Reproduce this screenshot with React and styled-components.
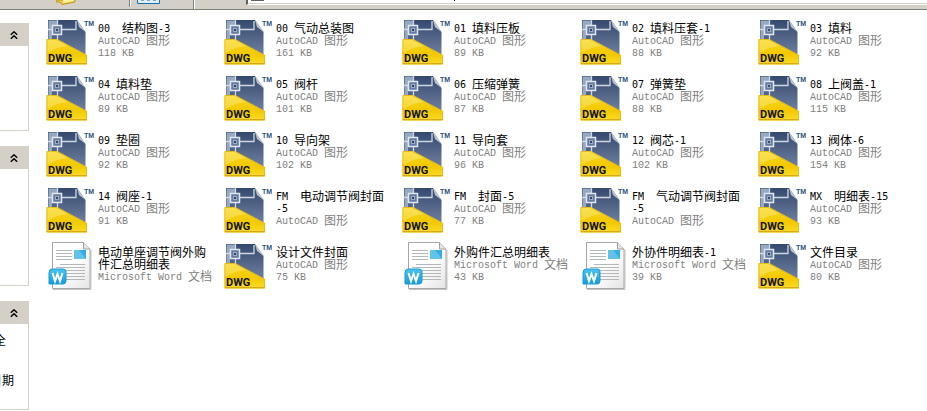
import React from 'react'
import styled, { createGlobalStyle } from 'styled-components';

const GlobalStyle = createGlobalStyle`
    * {
        box-sizing: border-box;
    }
    body {
        margin: 0;
        background-color: #fff;
        color: #000;
        font-family: "Noto Sans CJK SC", sans-serif;
        font-size: 12px;
        line-height: 12px;
    }
`;

const Container = styled.div`
    display: flex;
    flex-direction: column;
    min-height: 100vh;
    overflow: hidden;
`;

const Toolbar = styled.header`
    display: flex;
    align-items: flex-start;
    height: 10px;
    padding-left: 56px;
    overflow: hidden;
    background-color: #d4d0c8;
    border-bottom: 1px solid #808080;
`;

const ToolButton = styled.button`
    width: ${props=>props.$width}px;
    height: 5px;
    margin: 0;
    padding: 0;
    border: 0;
    background: none;

    svg {
        display: block;
    }
`;

const Separator = styled.div`
    width: 2px;
    height: ${props=>props.$height}px;
    margin: 0 ${props=>props.$after}px 0 ${props=>props.$before}px;
    border-left: 1px solid #808080;
    border-right: 1px solid #fff;
`;

const Address = styled.label`
    flex: 1;
    display: flex;
    height: 5px;
    overflow: hidden;
    background-color: #fff;
    border-left: 2px solid #606060;
    border-bottom: 1px solid #fff;
    box-shadow: inset 0 -1px 0 #d4d0c8;

    svg {
        flex: none;
        display: block;
    }
`;

const AddressInput = styled.input`
    flex: 1;
    height: 3px;
    padding: 0;
    border: 0;
    outline: 0;
    background: none;
`;

const Main = styled.div`
    flex: 1;
    display: flex;
    align-items: flex-start;
`;

const Sidebar = styled.aside`
    flex: none;
    display: flex;
    flex-direction: column;
    gap: 15px;
    width: 29px;
    padding-top: 13px;
    overflow: hidden;
`;

const Panel = styled.section`
    height: ${props=>props.$height}px;
    border-right: 1px solid #d4d0c8;
    border-bottom: 1px solid #d4d0c8;
`;

const PanelToggle = styled.button`
    display: flex;
    align-items: center;
    justify-content: center;
    width: 100%;
    height: 23px;
    margin: 0;
    padding: 0;
    border: 0;
    background-color: #d4d0c8;
`;

const PanelText = styled.p`
    display: flex;
    justify-content: flex-end;
    margin: 0;
    padding: ${props=>props.$top}px ${props=>props.$right}px 0 0;
    white-space: nowrap;
`;

const Files = styled.ul`
    flex: 1;
    display: grid;
    grid-template-columns: repeat(auto-fill, 168px);
    grid-auto-rows: 48px;
    gap: 8px 10px;
    margin: 0;
    padding: 8px 0 0 17px;
    list-style: none;
`;

const FileItem = styled.li`
    display: flex;
    gap: 4px;

    svg {
        flex: none;
    }
`;

const FileText = styled.div`
    width: 116px;
    padding-top: 4px;
`;

const FileName = styled.div`
    color: #000;
`;

const FileMeta = styled.div`
    color: #808080;
    white-space: nowrap;
`;

const Latin = styled.span`
    display: inline-block;
    font-family: ${props=>props.$light ? '"Liberation Mono"' : '"DejaVu Sans Mono"'}, monospace;
    font-size: 10px;
    line-height: 6px;
    vertical-align: 1px;
    white-space: pre;
`;

// half-width characters get the narrow face, Chinese keeps the page font
const Mixed = ({ text, light }) => (
    text.split(/([\x20-\x7e]+)/).filter(Boolean).map((run, i) => (
        /^[\x20-\x7e]/.test(run) ? <Latin key={i} $light={light}>{run}</Latin> : run
    ))
);

const DwgIcon = () => (
    <svg width="48" height="48" viewBox="0 0 48 48" aria-hidden="true">
        <defs>
            <linearGradient id="dwgBlue" x1="0" y1="0" x2="0" y2="1">
                <stop offset="0" stopColor="#34496f" />
                <stop offset="1" stopColor="#7c8da9" />
            </linearGradient>
            <linearGradient id="dwgGold" x1="0" y1="0" x2="0" y2="1">
                <stop offset="0" stopColor="#f8da28" />
                <stop offset=".6" stopColor="#f2c800" />
                <stop offset="1" stopColor="#f9dc28" />
            </linearGradient>
        </defs>
        <path d="M2 2H31L39.5 14V45H2Z" fill="url(#dwgBlue)" />
        <path d="M31 2L39.5 14L33 9Z" fill="#bac5d6" />
        <path d="M2.5 2.5H11V8H6V22H2.5Z" fill="#97a8c1" />
        <path d="M11.5 2V8M2 11.5H6M11.5 16V23M16 11.5H30V3" fill="none" stroke="#ced7e3" strokeWidth="1.3" />
        <rect x="6.5" y="7.5" width="9" height="9" fill="#647b9f" stroke="#e0e6ed" strokeWidth="1.5" />
        <rect x="9.5" y="10.5" width="3" height="3" fill="#2e4773" stroke="#9babc2" strokeWidth="1" />
        <path d="M.5 21H11L41 37V46.5H.5Z" fill="url(#dwgGold)" />
        <path d="M1 46V21.5H10.5L40.5 37.5V46Z" fill="none" stroke="#e9bd15" />
        <path d="M1.5 35V22H10L22 28Q10 29 1.5 35Z" fill="#fff2a0" opacity=".35" />
        <path d="M1 45.5H41" stroke="#d6a91c" />
        <text x="2" y="44" fontFamily="Roboto, sans-serif" fontWeight="700" fontSize="11" fill="#111">DWG</text>
        <text x="38" y="8" fontFamily="Liberation Sans, sans-serif" fontWeight="700" fontSize="7" fill="#285084">TM</text>
    </svg>
);

const WordIcon = () => (
    <svg width="48" height="48" viewBox="0 0 48 48" aria-hidden="true">
        <defs>
            <linearGradient id="wordPage" x1="0" y1="0" x2="1" y2="1">
                <stop offset=".5" stopColor="#fff" />
                <stop offset="1" stopColor="#e4e4e4" />
            </linearGradient>
            <linearGradient id="wordBadge" x1="0" y1="0" x2="0" y2="1">
                <stop offset="0" stopColor="#4cc4f1" />
                <stop offset="1" stopColor="#159cda" />
            </linearGradient>
        </defs>
        <path d="M7 47.5H45V8" fill="none" stroke="#c4c4c4" />
        <path d="M6.5 .5H37.5L44 7V46.5H6.5Z" fill="url(#wordPage)" stroke="#a6a6a6" />
        <path d="M37.5 .5V7H44" fill="#e5e5e5" stroke="#a0a0a0" />
        <path d="M10 8.5H26M10 11.5H26M10 14.5H26M10 17.5H26M14 22.5H39M10 25.5H39M20 28.5H39M20 31.5H39M20 34.5H39M20 37.5H39" stroke="#b5b8bb" />
        <rect x="28" y="8" width="12" height="9" fill="#35aee2" />
        <path d="M28 8H33L40 17H28Z" fill="#80d0f0" opacity=".6" />
        <path d="M6 27H17Q20 27 20 30V39Q20 42 17 42H3V31Q3 27 6 27Z" fill="url(#wordBadge)" stroke="#1a9bd5" />
        <path d="M6.5 31L9 39L11.5 32L14 39L16.5 31" fill="none" stroke="#fff" strokeWidth="2" />
    </svg>
);

const Chevrons = () => (
    <svg width="8" height="8" viewBox="0 0 8 8" aria-hidden="true">
        <path d="M.8 3.8L4 .8L7.2 3.8M.8 7.8L4 4.8L7.2 7.8" fill="none" stroke="#000" strokeWidth="1.4" />
    </svg>
);

const DWG = 'AutoCAD 图形';
const DOC = 'Microsoft Word 文档';

const files = [
    { name: '00  结构图-3', type: DWG, size: '118 KB' },
    { name: '00 气动总装图', type: DWG, size: '161 KB' },
    { name: '01 填料压板', type: DWG, size: '89 KB' },
    { name: '02 填料压套-1', type: DWG, size: '88 KB' },
    { name: '03 填料', type: DWG, size: '92 KB' },
    { name: '04 填料垫', type: DWG, size: '89 KB' },
    { name: '05 阀杆', type: DWG, size: '101 KB' },
    { name: '06 压缩弹簧', type: DWG, size: '87 KB' },
    { name: '07 弹簧垫', type: DWG, size: '88 KB' },
    { name: '08 上阀盖-1', type: DWG, size: '115 KB' },
    { name: '09 垫圈', type: DWG, size: '92 KB' },
    { name: '10 导向架', type: DWG, size: '102 KB' },
    { name: '11 导向套', type: DWG, size: '96 KB' },
    { name: '12 阀芯-1', type: DWG, size: '102 KB' },
    { name: '13 阀体-6', type: DWG, size: '154 KB' },
    { name: '14 阀座-1', type: DWG, size: '91 KB' },
    { name: 'FM  电动调节阀封面-5', type: DWG },
    { name: 'FM  封面-5', type: DWG, size: '77 KB' },
    { name: 'FM  气动调节阀封面-5', type: DWG },
    { name: 'MX  明细表-15', type: DWG, size: '93 KB' },
    { name: '电动单座调节阀外购件汇总明细表', type: DOC },
    { name: '设计文件封面', type: DWG, size: '75 KB' },
    { name: '外购件汇总明细表', type: DOC, size: '43 KB' },
    { name: '外协件明细表-1', type: DOC, size: '39 KB' },
    { name: '文件目录', type: DWG, size: '80 KB' },
];

const App = () => {
  return (
    <Container>
        <GlobalStyle/>
        <Toolbar>
            <ToolButton $width={20} aria-label="文件夹">
                <svg width="20" height="5" viewBox="0 0 20 5">
                    <path d="M0 0H19V2L6 4.5L4 2H0Z" fill="#f6d04d" stroke="#c09018" />
                    <path d="M7 0H18V1L7 3Z" fill="#fff0a0" />
                </svg>
            </ToolButton>
            <Separator $before={53} $after={6} $height={7}/>
            <ToolButton $width={23} aria-label="查看">
                <svg width="23" height="5" viewBox="0 0 23 5">
                    <path d="M.5 -1V3.5H22.5V-1" fill="#e2f0fb" stroke="#1673b8" />
                    <path d="M4 .5H7M10 .5H13M16 .5H19" stroke="#7da6cb" />
                </svg>
            </ToolButton>
            <Separator $before={33} $after={51} $height={9}/>
            <Address>
                <svg width="207" height="3" viewBox="0 0 207 3">
                    <path d="M3 0H16V1H3Z" fill="#606060" />
                    <path d="M206 0H207V1H206Z" fill="#000" />
                </svg>
                <AddressInput aria-label="地址"/>
            </Address>
        </Toolbar>
        <Main>
            <Sidebar>
                <Panel $height={108}>
                    <PanelToggle aria-label="折叠"><Chevrons/></PanelToggle>
                </Panel>
                <Panel $height={140}>
                    <PanelToggle aria-label="折叠"><Chevrons/></PanelToggle>
                </Panel>
                <Panel $height={109}>
                    <PanelToggle aria-label="折叠"><Chevrons/></PanelToggle>
                    <PanelText $top={10} $right={22}>全</PanelText>
                    <PanelText $top={28} $right={14}>日期</PanelText>
                </Panel>
            </Sidebar>
            <Files>
                {files.map((file) => (
                    <FileItem key={file.name}>
                        {file.type === DOC ? <WordIcon/> : <DwgIcon/>}
                        <FileText>
                            <FileName><Mixed text={file.name}/></FileName>
                            <FileMeta><Mixed text={file.type} light/></FileMeta>
                            {file.size && <FileMeta><Mixed text={file.size} light/></FileMeta>}
                        </FileText>
                    </FileItem>
                ))}
            </Files>
        </Main>
    </Container>
  )
}

export default App
